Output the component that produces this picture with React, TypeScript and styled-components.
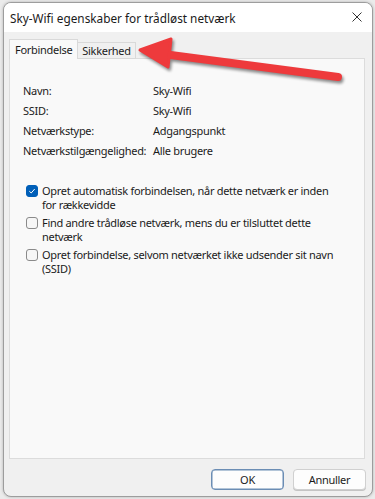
import styled, { createGlobalStyle } from "styled-components";

const GlobalStyle = createGlobalStyle`
  html, body {
    margin: 0;
    padding: 0;
    background: #ebebeb;
  }
  body {
    font-family: "Noto Sans", "Open Sans", sans-serif;
    font-size: 11px;
    letter-spacing: -0.3px;
    color: #1b1b1b;
  }
`;

const Stage = styled.div`
  position: relative;
  width: 375px;
  height: 499px;
  padding: 2px 0 0 3px;
  box-sizing: border-box;
`;

const Window = styled.div`
  width: 370px;
  height: 495px;
  box-sizing: border-box;
  border: 1px solid #9d9d9d;
  border-radius: 8px;
  overflow: hidden;
  display: flex;
  flex-direction: column;
  background: #f0f0f0;
  box-shadow: 0 0 3px rgba(0, 0, 0, 0.25);
`;

const TitleBar = styled.div`
  height: 29px;
  flex: none;
  display: flex;
  align-items: center;
  justify-content: space-between;
  padding: 0 9px 0 6px;
  background: #ffffff;
`;

const Title = styled.span`
  font-size: 11.8px;
  letter-spacing: 0;
  color: #1a1a1a;
`;

const CloseButton = styled.span`
  display: flex;
  width: 12px;
  height: 12px;
  margin-top: -2px;
`;

const Body = styled.div`
  flex: 1;
  display: flex;
  flex-direction: column;
  padding: 7px 6px 0 5px;
`;

const TabRow = styled.div`
  display: flex;
  align-items: flex-end;
  height: 20px;
  position: relative;
  z-index: 1;
  margin-bottom: -1px;
`;

const Tab = styled.div<{ $active?: boolean }>`
  height: ${({ $active }) => ($active ? "20px" : "17px")};
  box-sizing: border-box;
  padding: 0 ${({ $active }) => ($active ? "5px" : "4px")};
  display: flex;
  align-items: center;
  background: ${({ $active }) => ($active ? "#f9f9f9" : "#f0f0f0")};
  border: 1px solid #d9d9d9;
  border-bottom: ${({ $active }) => ($active ? "none" : "1px solid #d9d9d9")};
  margin-left: ${({ $active }) => ($active ? "0" : "-1px")};
  color: #1b1b1b;
`;

const Panel = styled.div`
  width: 356px;
  height: 401px;
  box-sizing: border-box;
  background: #f9f9f9;
  border: 1px solid #dcdcdc;
  padding: 21px 13px 0 13px;
`;

const InfoGrid = styled.div`
  display: grid;
  grid-template-columns: 130px auto;
  grid-auto-rows: 20px;
  align-items: center;
`;

const CheckList = styled.div`
  display: flex;
  flex-direction: column;
  gap: 4px;
  margin-top: 24px;
  padding-left: 3px;
`;

const CheckRow = styled.label`
  display: flex;
  align-items: flex-start;
  gap: 4px;
`;

const Box = styled.span<{ $checked?: boolean }>`
  flex: none;
  width: 12px;
  height: 12px;
  box-sizing: border-box;
  margin-top: 1px;
  border-radius: 3px;
  display: flex;
  align-items: center;
  justify-content: center;
  background: ${({ $checked }) => ($checked ? "#005fb8" : "#f6f6f6")};
  border: 1px solid ${({ $checked }) => ($checked ? "#005fb8" : "#8a8a8a")};
`;

const CheckText = styled.span`
  width: 292px;
  line-height: 14px;
`;

const Footer = styled.div`
  height: 38px;
  flex: none;
  display: flex;
  align-items: center;
  justify-content: flex-end;
  gap: 9px;
  padding-top: 2px;
  box-sizing: border-box;
`;

const Button = styled.button<{ $primary?: boolean }>`
  width: 73px;
  height: 21px;
  box-sizing: border-box;
  border-radius: 4px;
  background: #fdfdfd;
  border: 1px solid ${({ $primary }) => ($primary ? "#6b8db4" : "#d0d0d0")};
  box-shadow: ${({ $primary }) =>
    $primary ? "inset 0 0 0 0.5px #6b8db4" : "0 1px 0 #c4c4c4"};
  font-family: inherit;
  font-size: 11px;
  letter-spacing: -0.3px;
  color: #1b1b1b;
  padding: 0;
`;

const Overlay = styled.svg`
  position: absolute;
  top: 0;
  left: 0;
  pointer-events: none;
`;

const info: [string, string][] = [
  ["Navn:", "Sky-Wifi"],
  ["SSID:", "Sky-Wifi"],
  ["Netværkstype:", "Adgangspunkt"],
  ["Netværkstilgængelighed:", "Alle brugere"],
];

const options = [
  { text: "Opret automatisk forbindelsen, når dette netværk er inden for rækkevidde", checked: true },
  { text: "Find andre trådløse netværk, mens du er tilsluttet dette netværk", checked: false },
  { text: "Opret forbindelse, selvom netværket ikke udsender sit navn (SSID)", checked: false },
];

const App = () => {
  return (
    <Stage>
      <GlobalStyle />
      <Window>
        <TitleBar>
          <Title>Sky-Wifi egenskaber for trådløst netværk</Title>
          <CloseButton>
            <svg width="12" height="12" viewBox="0 0 12 12">
              <path d="M1.5 1.5 L10.5 10.5 M10.5 1.5 L1.5 10.5" stroke="#333" strokeWidth="1" />
            </svg>
          </CloseButton>
        </TitleBar>
        <Body>
          <TabRow>
            <Tab $active>Forbindelse</Tab>
            <Tab>Sikkerhed</Tab>
          </TabRow>
          <Panel>
            <InfoGrid>
              {info.flatMap(([label, value]) => [
                <span key={label}>{label}</span>,
                <span key={label + "-value"}>{value}</span>,
              ])}
            </InfoGrid>
            <CheckList>
              {options.map((o) => (
                <CheckRow key={o.text}>
                  <Box $checked={o.checked}>
                    {o.checked && (
                      <svg width="8" height="8" viewBox="0 0 8 8">
                        <path d="M1.3 4.2 L3.2 6 L6.7 2" fill="none" stroke="#fff" strokeWidth="1" />
                      </svg>
                    )}
                  </Box>
                  <CheckText>{o.text}</CheckText>
                </CheckRow>
              ))}
            </CheckList>
          </Panel>
          <Footer>
            <Button $primary>OK</Button>
            <Button>Annuller</Button>
          </Footer>
        </Body>
      </Window>
      <Overlay width="375" height="499" viewBox="0 0 375 499">
        <defs>
          <filter id="arrowShadow" x="-10%" y="-50%" width="120%" height="200%">
            <feGaussianBlur stdDeviation="1.5" />
          </filter>
        </defs>
        <g transform="translate(1.5 2.5)" filter="url(#arrowShadow)" opacity="0.45">
          <path d="M163 54 L338 77" stroke="#000" strokeWidth="8" strokeLinecap="round" />
          <polygon points="140,50 171,39 168,67" fill="#000" stroke="#000" strokeWidth="3" strokeLinejoin="round" />
        </g>
        <path d="M163 54 L338 77" stroke="#ee3a3c" strokeWidth="8" strokeLinecap="round" />
        <polygon points="140,50 171,39 168,67" fill="#ee3a3c" stroke="#ee3a3c" strokeWidth="3" strokeLinejoin="round" />
      </Overlay>
    </Stage>
  );
};

export default App;
